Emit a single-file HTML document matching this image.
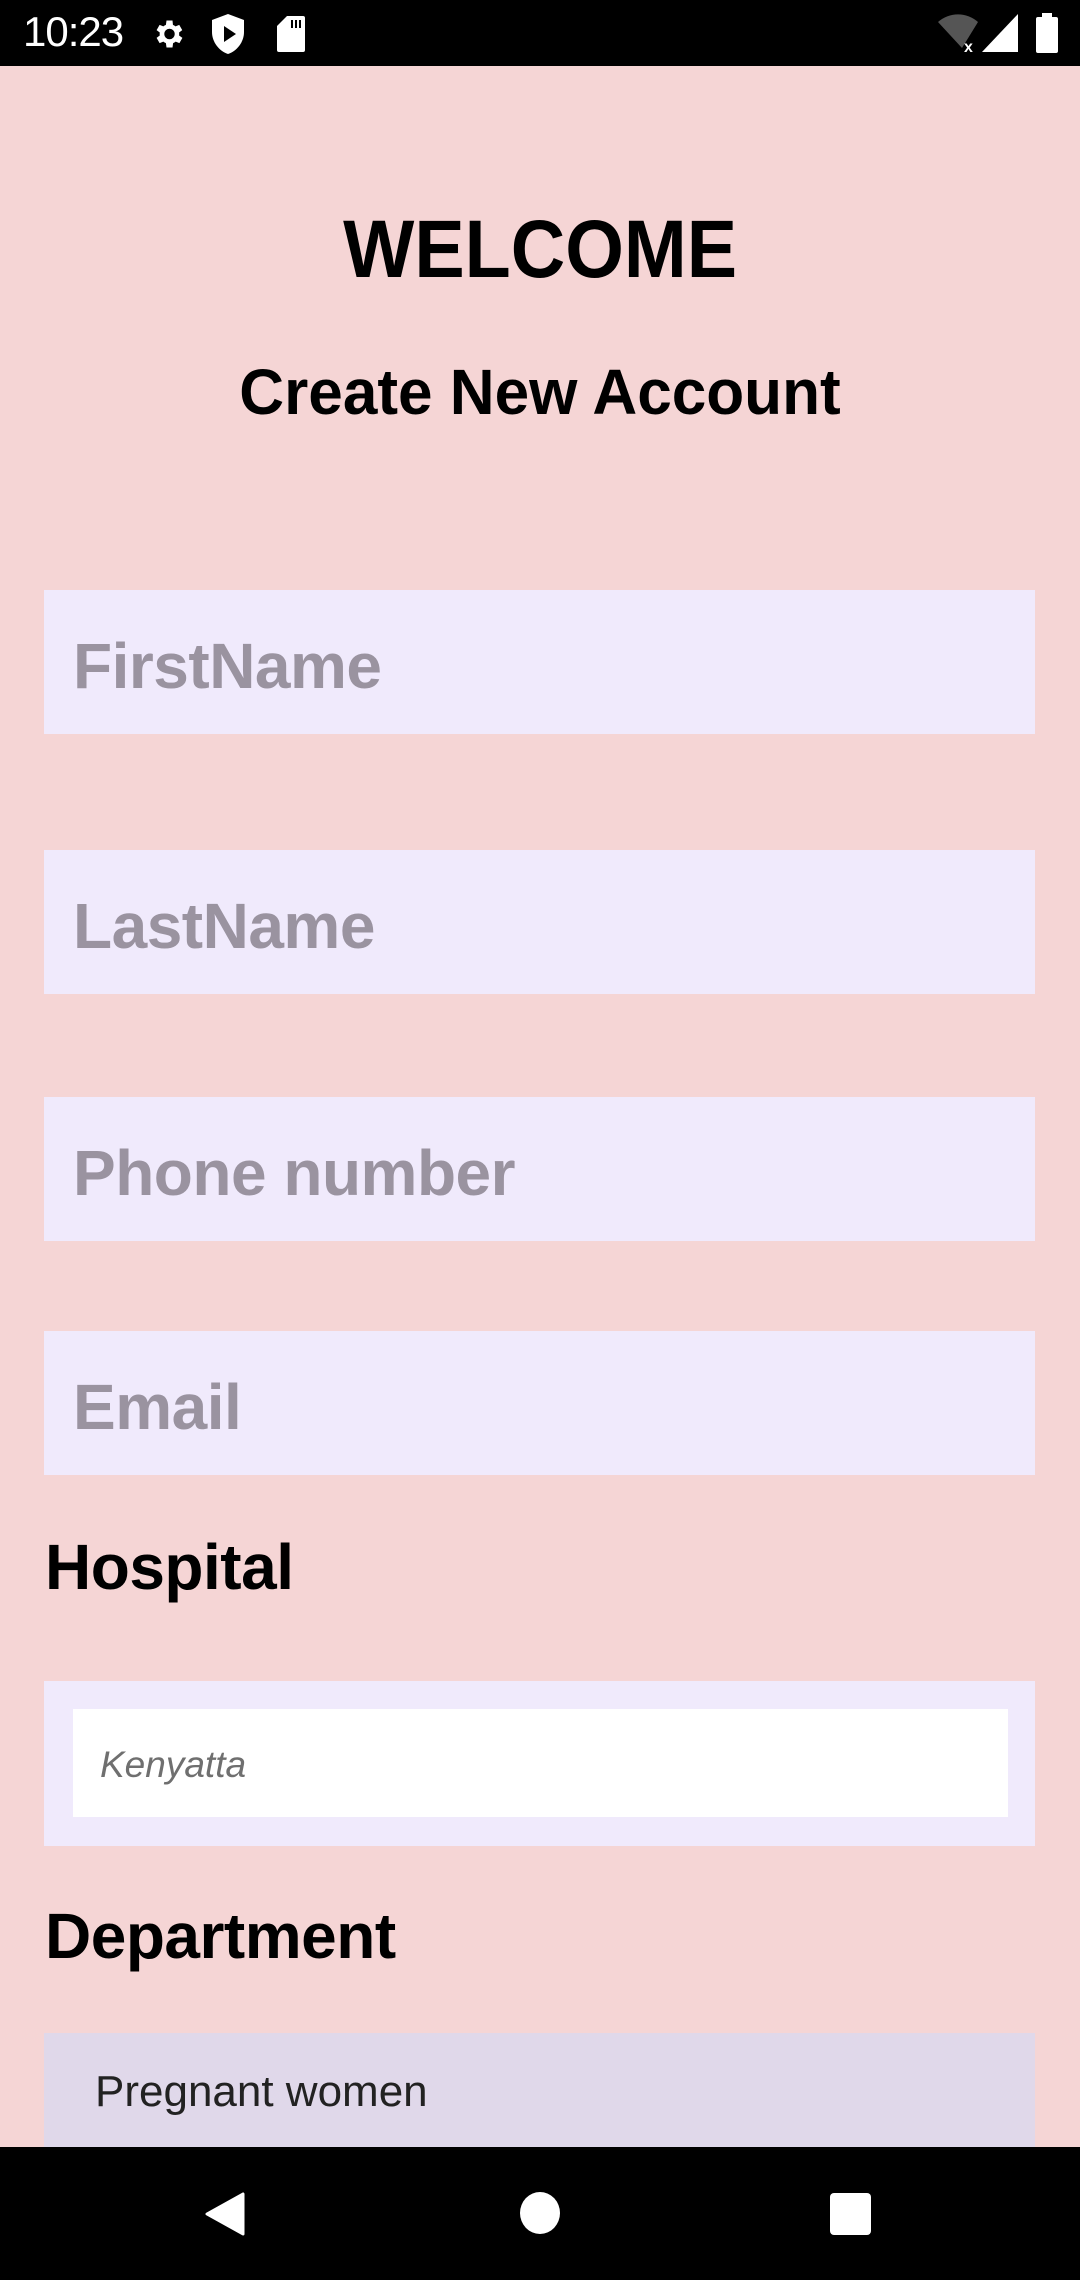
<!DOCTYPE html>
<html><head><meta charset="utf-8"><style>
*{margin:0;padding:0;box-sizing:border-box}
body{width:1080px;height:2280px;overflow:hidden;background:#f5d5d5;font-family:"Liberation Sans",Roboto,sans-serif;position:relative}
.sb{position:absolute;left:0;top:0;width:1080px;height:66px;background:#000;color:#fff}
.nav{position:absolute;left:0;top:2147px;width:1080px;height:133px;background:#000}
.abs{position:absolute}
.field{position:absolute;left:44px;width:991px;height:144px;background:#f0eafc;display:flex;align-items:center;padding-left:29px;padding-top:8px;font-size:64px;font-weight:bold;color:#9a93a0;letter-spacing:-0.5px}
.h{position:absolute;left:0;width:1080px;text-align:center;font-weight:bold;color:#000}
.h span{display:inline-block}
.lab{position:absolute;left:45px;font-size:64px;font-weight:bold;color:#000;letter-spacing:-0.5px}
</style></head><body>
<div class="sb">
 <div class="abs" style="left:23px;top:8px;font-size:42px;letter-spacing:-1px">10:23</div>
 <svg class="abs" style="left:150px;top:16px" width="36" height="36" viewBox="0 0 24 24"><path fill="#fff" d="M19.4 13a7.5 7.5 0 000-2l2.1-1.6-2-3.5-2.5 1a7 7 0 00-1.7-1L15 3h-4l-.4 2.9a7 7 0 00-1.7 1l-2.5-1-2 3.5L6.5 11a7.5 7.5 0 000 2l-2.1 1.6 2 3.5 2.5-1a7 7 0 001.7 1L11 21h4l.4-2.9a7 7 0 001.7-1l2.5 1 2-3.5zM13 15.5a3.5 3.5 0 110-7 3.5 3.5 0 010 7z"/></svg>
 <svg class="abs" style="left:212px;top:14px" width="32" height="40" viewBox="0 0 16 20"><path fill="#fff" d="M8 0L0 3v6c0 5 3.5 9.5 8 11 4.5-1.5 8-6 8-11V3z"/><path fill="#000" d="M6 6v8l6-4z"/></svg>
 <svg class="abs" style="left:277px;top:16px" width="28" height="36" viewBox="0 0 14 18"><path fill="#fff" d="M5 0h8a1 1 0 011 1v16a1 1 0 01-1 1H1a1 1 0 01-1-1V5z"/><path fill="#000" d="M7 2h1v4H7zM9 2h1v4H9zM11 2h1v4h-1z"/></svg>
 <svg class="abs" style="left:938px;top:14px" width="40" height="38" viewBox="0 0 20 19"><path fill="#555" d="M0 4a15 15 0 0120 0L12 17z"/><text x="13" y="19" font-size="8" fill="#fff" font-family="Liberation Sans" font-weight="bold">x</text></svg>
 <svg class="abs" style="left:982px;top:14px" width="36" height="38" viewBox="0 0 18 19"><path fill="#fff" d="M18 0v19H0z"/></svg>
 <svg class="abs" style="left:1036px;top:13px" width="22" height="40" viewBox="0 0 11 20"><path fill="#fff" d="M3 0h5v2h2a1 1 0 011 1v16a1 1 0 01-1 1H1a1 1 0 01-1-1V3a1 1 0 011-1h2z"/></svg>
</div>
<div class="h" style="top:200px;font-size:82px;line-height:100px"><span style="transform:scaleX(0.92)">WELCOME</span></div>
<div class="h" style="top:354px;font-size:64px;line-height:76px"><span style="transform:scaleX(0.97)">Create New Account</span></div>
<div class="field" style="top:590px">FirstName</div>
<div class="field" style="top:850px">LastName</div>
<div class="field" style="top:1097px">Phone number</div>
<div class="field" style="top:1331px">Email</div>
<div class="lab" style="top:1527px;line-height:80px">Hospital</div>
<div class="abs" style="left:44px;top:1681px;width:991px;height:165px;background:#f0eafc"></div>
<div class="abs" style="left:73px;top:1709px;width:935px;height:108px;background:#fff;display:flex;align-items:center;padding-left:27px;padding-top:4px;font-size:37px;font-style:italic;color:#6f6f6f">Kenyatta</div>
<div class="lab" style="top:1896px;line-height:80px">Department</div>
<div class="abs" style="left:44px;top:2033px;width:991px;height:114px;background:#e0d8ea"></div>
<div class="abs" style="left:95px;top:2066px;font-size:44px;color:#222;line-height:52px">Pregnant women</div>
<div class="nav">
 <svg class="abs" style="left:205px;top:45px" width="40" height="44" viewBox="0 0 40 44"><path fill="#fff" d="M38 2v40L2 22z" stroke="#fff" stroke-linejoin="round" stroke-width="3"/></svg>
 <div class="abs" style="left:520px;top:45px;width:40px;height:42px;border-radius:50%;background:#fff"></div>
 <div class="abs" style="left:830px;top:46px;width:41px;height:42px;border-radius:4px;background:#fff"></div>
</div>
</body></html>
